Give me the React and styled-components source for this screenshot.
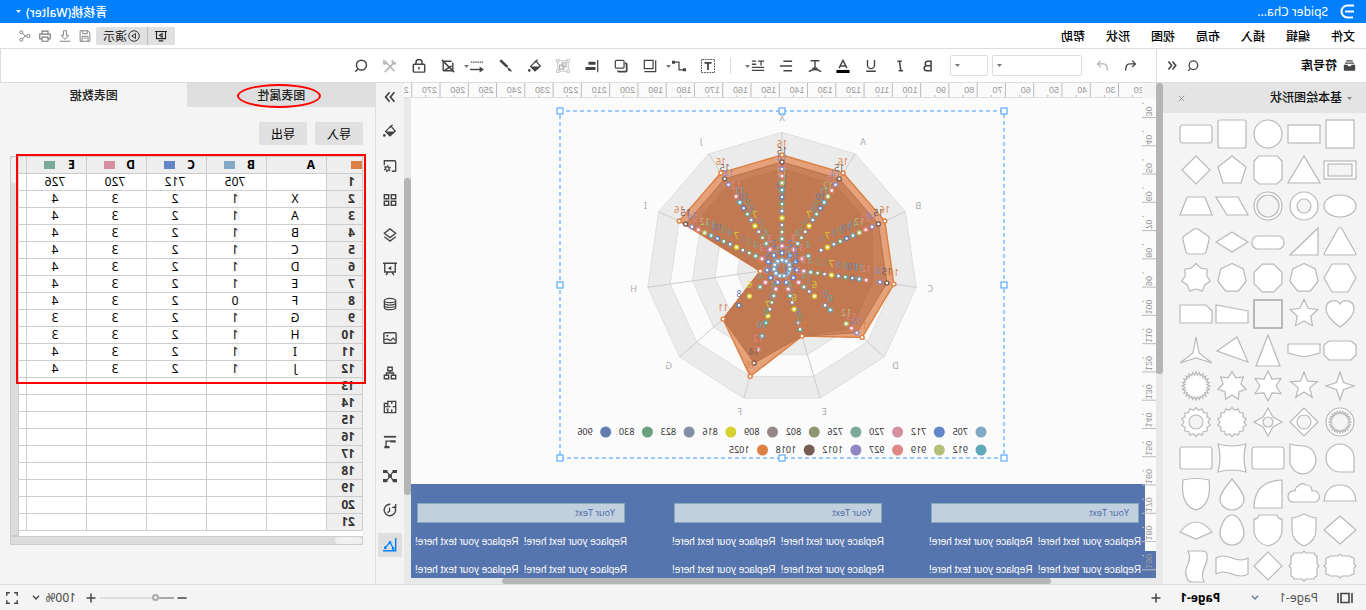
import React from "react";
import styled, { createGlobalStyle, css } from "styled-components";

const GlobalStyle = createGlobalStyle`
  * { box-sizing: border-box; }
  body { margin: 0; overflow: hidden; background: #f4f4f4; }
  body, button, input, select { font-family: "Noto Sans", "Noto Sans CJK SC", sans-serif; font-size: 12px; }
  button { border: 0; padding: 0; background: none; color: inherit; }
`;

/* The editor is displayed as a mirror image; everything inside is laid out left to right. */
const Mirror = styled.div`
  transform: scaleX(-1);
  display: flex;
  flex-direction: column;
  height: 100vh;
  min-width: 1200px;
  color: #222;
  line-height: 16px;
`;

/* ---------- title and menu ---------- */
const TitleBar = styled.header`
  display: flex;
  align-items: center;
  flex: none;
  height: 23px;
  padding: 0 16px 0 11px;
  background: #007fff;
  color: #fff;
`;
const FileName = styled.span`
  margin-left: 12px;
`;
const Account = styled.button`
  display: flex;
  align-items: center;
  gap: 5px;
  margin-left: auto;
  font-weight: 500;
`;
const MenuBar = styled.nav`
  display: flex;
  align-items: center;
  flex: none;
  height: 25px;
  padding: 0 18px 0 11px;
  background: #fff;
  color: #000;
`;
const MenuItem = styled.button`
  margin-right: 21px;
  font-weight: 500;
`;
const QuickActions = styled.div`
  display: flex;
  align-items: center;
  gap: 6px;
  margin-left: auto;
  color: #777;
`;
const PresentGroup = styled.div`
  display: flex;
  height: 18px;
  margin-right: -2px;
  border-radius: 2px;
  overflow: hidden;
  background: #e0e0e0;
  color: #222;
`;
const PresentButton = styled.button`
  display: flex;
  align-items: center;
  justify-content: center;
  gap: 1px;
  width: ${(p) => (p.$wide ? 52 : 27)}px;
  border-left: ${(p) => (p.$wide ? "1px solid #bbb" : "0")};
`;
const IconButton = styled.button`
  position: relative;
  display: flex;
  align-items: center;
  justify-content: center;
  flex: none;
  width: ${(p) => p.$w || 20}px;
  height: ${(p) => p.$h || 20}px;
  border-radius: 1px;
  background: ${(p) => (p.$active ? "#dfdfdf" : "none")};
  color: ${(p) => (p.$active ? "#007fff" : p.$dim ? "#b5b5b5" : "inherit")};
`;

/* ---------- tool bar ---------- */
const ToolBar = styled.div`
  display: flex;
  flex: none;
  height: 35px;
  border-top: 1px solid #ddd;
  border-bottom: 1px solid #ddd;
  background: #fff;
  color: #444;
`;
const LibraryTitle = styled.div`
  display: flex;
  align-items: center;
  flex: none;
  width: 210px;
  padding: 0 6px 0 10px;
  border-right: 1px solid #ddd;
`;
const LibraryName = styled.h2`
  flex: 1;
  margin: 0 0 0 6px;
  font-size: 12px;
  color: #111;
`;
const Tools = styled.div`
  display: flex;
  align-items: center;
  flex: 1;
  padding-left: 15px;
  border-right: 1px solid #ddd;
`;
const History = styled.div`
  display: flex;
  gap: 8px;
  margin-right: 11px;
`;
const PickerBox = styled.span`
  position: relative;
  flex: none;
  width: ${(p) => p.$w}px;
  margin-right: 4px;
`;
const Picker = styled.select`
  display: block;
  width: 100%;
  height: 21px;
  border: 1px solid #ddd;
  border-radius: 2px;
  background: #fff;
  appearance: none;
`;
const PickerCaret = styled.span`
  position: absolute;
  right: 5px;
  top: 9px;
  display: flex;
  pointer-events: none;
`;
const ToolGroup = styled.div`
  display: flex;
  justify-content: space-between;
  flex: none;
  width: ${(p) => p.$w}px;
  margin-left: ${(p) => p.$gap || 0}px;
`;
const ToolCaret = styled.span`
  position: absolute;
  right: -3px;
  top: 9px;
  display: flex;
`;
const Divider = styled.span`
  width: 1px;
  height: 16px;
  margin: 0 12px 0 17px;
  background: #ddd;
`;

/* ---------- shape library ---------- */
const Workspace = styled.div`
  display: flex;
  flex: 1;
  min-height: 0;
  background: #f4f4f4;
`;
const Library = styled.aside`
  flex: none;
  width: 203px;
  overflow: hidden;
`;
const LibraryHead = styled.div`
  display: flex;
  align-items: center;
  height: 30px;
  padding: 0 14px;
  background: #e4e4e4;
  color: #888;
`;
const LibraryHeadName = styled.h3`
  flex: 1;
  margin: 0 0 0 5px;
  font-size: 12px;
  font-weight: 500;
  color: #111;
`;
const ShapeGrid = styled.div`
  display: grid;
  grid-template-columns: repeat(5, 36px);
  grid-auto-rows: 36px;
  padding: 3px 0 0 8px;
`;
const ShapeCell = styled.button`
  display: flex;
  svg { overflow: visible; fill: #fff; stroke: #b8b8b8; stroke-width: 1.2; }
`;
const ScrollTrack = styled.div`
  display: flex;
  flex-direction: ${(p) => (p.$x ? "row" : "column")};
  flex: none;
  ${(p) => (p.$x ? css`height: 6px;` : css`width: 7px;`)}
  background: #e9e9e9;
`;
const ScrollThumb = styled.div`
  flex: none;
  border-radius: 3px;
  background: #b5b5b5;
  ${(p) => (p.$x
    ? css`width: ${p.$size}; margin-left: ${p.$at};`
    : css`height: ${p.$size}; margin-top: ${p.$at};`)}
`;

/* ---------- canvas ---------- */
const Center = styled.main`
  display: flex;
  flex-direction: column;
  flex: 1;
  min-width: 0;
`;
const TopRuler = styled.div`
  flex: none;
  height: 15px;
  margin-left: 14px;
  border-bottom: 1px solid #ddd;
  overflow: hidden;
  background: #fafafa;
  svg { display: block; }
`;
const CanvasRow = styled.div`
  display: flex;
  flex: 1;
  min-height: 0;
`;
const SideRuler = styled.div`
  flex: none;
  width: 14px;
  overflow: hidden;
  background: #fafafa;
  svg { display: block; }
`;
const Canvas = styled.section`
  display: flex;
  flex-direction: column;
  flex: 1;
  min-width: 0;
  overflow: hidden;
  background: #fbfbfb;
`;
const ChartArea = styled.div`
  flex: none;
  height: 386px;
  padding: 9px 0 0 134px;
  svg { display: block; }
`;
const Band = styled.div`
  display: flex;
  gap: 45px;
  flex: 1;
  padding: 19px 0 0 1px;
  background: #5675ae;
`;
const Card = styled.div`
  flex: none;
  width: 212px;
`;
const CardTitle = styled.h4`
  height: 20px;
  margin: 0 2px 11px;
  padding: 0 9px;
  border: 1px solid #86aabd;
  background: #c0d0df;
  color: #4a65a0;
  font: 9px/18px "Open Sans", sans-serif;
`;
const CardLine = styled.p`
  display: flex;
  justify-content: space-between;
  margin: 0 0 12px;
  color: #fff;
  font: 10px/16px "Liberation Sans", sans-serif;
  white-space: nowrap;
`;

/* ---------- right side ---------- */
const Rail = styled.div`
  display: flex;
  flex-direction: column;
  justify-content: space-between;
  align-items: center;
  flex: none;
  width: 28px;
  height: 474px;
  padding-top: 2px;
  color: #444;
`;
const Panel = styled.aside`
  position: relative;
  flex: none;
  width: 376px;
  border-left: 1px solid #ddd;
`;
const Tabs = styled.div`
  display: flex;
  height: 24px;
`;
const Tab = styled.button`
  position: relative;
  flex: 1;
  font-weight: 500;
  background: ${(p) => (p.$shaded ? "#dedede" : "none")};
  border-radius: 0 0 2px 0;
`;
const RedOval = styled.span`
  position: absolute;
  left: 54px;
  top: 1px;
  width: 84px;
  height: 24px;
  border: 2px solid #f00;
  border-radius: 50%;
`;
const PanelButtons = styled.div`
  display: flex;
  gap: 8px;
  padding: 15px 12px 11px;
`;
const PanelButton = styled.button`
  width: 48px;
  height: 23px;
  border-radius: 2px;
  background: #e0e0e0;
  color: #000;
`;
const SheetFrame = styled.div`
  position: relative;
  width: 353px;
  margin-left: 12px;
  display: grid;
  grid-template-columns: 1fr 9px;
`;
const SheetView = styled.div`
  overflow: hidden;
  padding-bottom: 5px;
  background: #fff;
`;
const Sheet = styled.table`
  width: 396px;
  table-layout: fixed;
  border-collapse: collapse;
  line-height: 14px;
  color: #000;
  th, td { height: 17px; padding: 0; border: 1px solid #ccc; }
  thead th, tbody th { background: #eee; text-align: left; }
  tbody th { padding-left: 7px; color: #333; }
  td { background: #fff; padding-left: 3px; text-align: center; }
`;
const HeadCell = styled.div`
  display: flex;
  align-items: center;
  padding-left: ${(p) => (p.$corner ? 0 : 11)}px;
`;
const HeadLetter = styled.span`
  width: 20px;
`;
const Swatch = styled.span`
  width: 11px;
  height: 8px;
  background: ${(p) => p.$c};
`;
const SheetBar = styled.div`
  background: #dcdcdc;
  border: 1px solid #ccc;
  grid-column: ${(p) => (p.$x ? "1 / 3" : "auto")};
  height: ${(p) => (p.$x ? "9px" : "auto")};
`;
const SheetThumb = styled.div`
  background: #f0f0f0;
  border-radius: 4px;
  width: ${(p) => (p.$x ? "27px" : "7px")};
  height: ${(p) => (p.$x ? "7px" : "26px")};
`;
const RedBox = styled.div`
  position: absolute;
  left: -3px;
  right: 6px;
  top: -2px;
  height: 230px;
  border: 2px solid #f00;
`;

/* ---------- status bar ---------- */
const StatusBar = styled.footer`
  display: flex;
  align-items: center;
  flex: none;
  height: 26px;
  padding: 0 0 0 11px;
  border-top: 1px solid #ddd;
  background: #f4f4f4;
  color: #444;
`;
const PageSelect = styled.button`
  display: flex;
  align-items: center;
  gap: 20px;
  margin-left: 17px;
  color: #555;
`;
const CurrentPage = styled.button`
  margin: 0 14px 0 31px;
  font-weight: 700;
  color: #000;
`;
const ZoomTools = styled.div`
  display: flex;
  align-items: center;
  margin-left: auto;
`;
const ZoomSlider = styled.input`
  width: 74px;
  height: 10px;
  margin: 0 1px 0 2px;
  background: none;
  appearance: none;
  &::-webkit-slider-runnable-track {
    height: 2px;
    background: linear-gradient(90deg, #aaa 20%, #ddd 20%);
  }
  &::-webkit-slider-thumb {
    appearance: none;
    width: 7px;
    height: 7px;
    margin-top: -3px;
    border: 2px solid #aaa;
    border-radius: 50%;
    background: #fff;
  }
`;
const ZoomLevel = styled.select`
  width: 36px;
  margin-left: 7px;
  padding: 0;
  border: 0;
  background: none;
  color: #444;
  appearance: none;
`;
const ScreenTools = styled.div`
  display: flex;
  margin-left: 8px;
`;

/* ---------- icons ---------- */
const Icon = ({ children, s = 14, w = 1.4, box = 16 }) => (
  <svg width={s} height={s} viewBox={`0 0 ${box} ${box}`} fill="none" stroke="currentColor" strokeWidth={w} aria-hidden="true">
    {children}
  </svg>
);
const Caret = ({ color = "currentColor" }) => (
  <svg width="5" height="3" viewBox="0 0 5 3" aria-hidden="true"><path d="M0 0h5L2.500 3z" fill={color} /></svg>
);
const Chevron = ({ color = "currentColor" }) => (
  <svg width="8" height="5" viewBox="0 0 8 5" fill="none" stroke={color} strokeWidth="1.300" aria-hidden="true"><path d="M1 .7 4 4 7 .7" /></svg>
);
const F = { fill: "currentColor", stroke: "none" };
const I = {
  search: <><circle cx="7.500" cy="7" r="5.700" strokeWidth="1.700" /><path d="M11.500 11.500l3 3" strokeWidth="1.700" /></>,
  collapse: <path d="M8 3 4 8l4 5M13 3 9 8l4 5" strokeWidth="2" />,
  expand: <path d="M3 2.500l4.500 5.500L3 13.500M8.500 2.500 13 8l-4.500 5.500" strokeWidth="2" />,
  library: <><path d="M1 7h4.500l1 2h3l1-2H15v6.500a1 1 0 0 1-1 1H2a1 1 0 0 1-1-1z" {...F} /><path d="M2.500 5h11M4 2.300h8" /></>,
  undo: <path d="M6 2 2 6l4 4M2.500 6H9q5 0 5 8" strokeWidth="1.700" />,
  redo: <path d="M10 2l4 4-4 4M13.500 6H7q-5 0-5 8" strokeWidth="1.700" />,
  bold: <path d="M4.500 2.500h4a2.600 2.600 0 0 1 0 5.300h-4zM4.500 7.800h5a2.800 2.800 0 0 1 0 5.700h-5z" strokeWidth="1.800" />,
  italic: <path d="M6 2.500h5M4.500 13.500h5M8.700 2.500l-1.700 11" strokeWidth="1.800" />,
  underline: <path d="M4 1v6a4 4 0 0 0 8 0V1M2.500 14h11" strokeWidth="1.600" />,
  color: <><path d="M3.500 10.500 8 1.500l4.500 9M5 8h6" strokeWidth="1.600" /><path d="M.5 12.500h15V16H.5z" fill="#000" stroke="none" /></>,
  arc: <path d="M3 2h10M8 2v8M5 10.500h6M1 14.500q7-5 14 0" strokeWidth="1.600" />,
  align: <path d="M1 2.500h10M1 8h14M1 13.500h10" strokeWidth="1.600" />,
  spacing: <path d="M1 2.500h7M4.500 2.500v5M10 2.500h5M10 6h5M1 9.500h14M1 13h14" strokeWidth="1.500" />,
  textbox: <><path d="M.5 .5h15v15H.5z" strokeDasharray="2 1" strokeWidth="1.100" /><path d="M4 4.500h8M8 4.500v8" strokeWidth="2" /></>,
  connector: <><path d="M2.500 12.500H8v-9h5" /><path d="M0 10.500h3.500V14H0zM12.500 2H16v3.500h-3.500z" {...F} /></>,
  front: <><path d="M4.500 1.500h10v9.500h-10z" /><path d="M1.500 1.500v13H14.500" /></>,
  copy: <><rect x="4.500" y="1.500" width="10" height="9" rx="1.500" /><path d="M3.500 5H2.500q-1 0-1 1v7.500q0 1 1 1h7.500q1.500 0 1.500-1.500" strokeWidth="2" /></>,
  alignLeft: <><path d="M1.500 1v14" /><path d="M4 3h8v3.500H4zM4 9h11.500v3.500H4z" {...F} /></>,
  group: <><path d="M.5 .5h3v3h-3zM12.500 .5h3v3h-3zM.5 12.500h3v3h-3zM12.500 12.500h3v3h-3zM4 2h8M4 14h8M2 4v8M14 4v8" strokeWidth=".9" /><path d="M4.500 4.500h4.500v4.500h-4.500zM7 7h5v4.500H7z" /></>,
  fill: <><path d="M7 2.500 13 8.500 8 13.500 2 8z" /><path d="M1.500 8.500H13L8 14z" {...F} /><path d="M8.500 4 5 .8" /><circle cx="14.500" cy="13" r="1.500" {...F} /></>,
  brush: <><path d="M14.500 1.500 6.500 9" strokeWidth="3" /><path d="M7 9 3 11.500 1 14.500 5 13.500z" {...F} /></>,
  lines: <><path d="M1 3.500h14" strokeDasharray="1.500 1" /><path d="M4 12h12" strokeWidth="1.600" /><path d="M5 8.500 0 12l5 3.500z" {...F} /></>,
  crop: <><path d="M2.500 4v8.500q0 1 1 1h9q1 0 1-1v-9q0-1-1-1H4" strokeWidth="1.600" /><path d="M15 1 1 15M4 8l8 5" strokeWidth="1.700" /></>,
  lock: <><rect x="1.500" y="6" width="13" height="9" rx="1" strokeWidth="1.700" /><path d="M4.500 6V4a3.500 3.500 0 0 1 7 0v2M8 9v3" strokeWidth="1.700" /></>,
  tools: <><path d="M2 3l12 12M14 2 3 14M1 5.500h4L5.500 1M11 5.500h4V1.500" strokeWidth="1.800" /></>,
  save: <path d="M1.500 4 4 1h10.500v14h-13zM5 1v4h6V1M4 15V8.500h8V15M6 11h4" />,
  download: <path d="M6 1v6H3l5 5.500L13 7h-3V1zM1 15h14" />,
  print: <path d="M4 5V1.500h8V5M4 12H1V5.500h14V12H12M4 9.500h8V15H4z" strokeWidth="1.500" />,
  share: <><circle cx="3.500" cy="8" r="2.200" /><circle cx="13" cy="3" r="2" /><circle cx="13" cy="13" r="2" /><path d="M6 8h2l3.500-4M8 8l3.500 4" /></>,
  screen: <><path d="M0 2h16M2 2v9.500h12V2M5 14.500h6" strokeWidth="1.500" /><path d="M6.500 4.500 10 7l-3.500 2.500z" /></>,
  play: <><circle cx="8" cy="8" r="7" strokeWidth="1.200" /><path d="M6 4.800v6.400L11 8z" strokeWidth="1.200" /></>,
  gear: <><path d="M1.500 2.500h13v11.500H6" strokeWidth="0" /><path d="M1.500 14V3.500q0-1.500 1.500-1.500h11.500V7M1.500 14H6" strokeWidth="1.500" /><circle cx="11" cy="11" r="3" strokeWidth="2" strokeDasharray="1.600 1.540" /><circle cx="11" cy="11" r="2" strokeWidth="1.300" /></>,
  grid: <path d="M1.500 2h5v4.500h-5zM9.500 2h5v4.500h-5zM1.500 9.500h5V14h-5zM9.500 9.500h5V14h-5z" strokeWidth="1.600" />,
  layers: <path d="M8 1 14.500 6 8 11 1.500 6zM1.500 10 8 15l6.500-5" strokeWidth="1.500" />,
  board: <><path d="M0 1.500h16M2 2v9.500h12V2M5.500 12l-2 3M10.500 12l2 3" strokeWidth="1.600" /><path d="M6.500 4.500 10.500 7l-4 2.500z" {...F} /></>,
  data: <><ellipse cx="8" cy="4" rx="6.500" ry="2.500" /><path d="M1.500 4v8q0 2.500 6.500 2.500t6.500-2.500V4M1.500 6.700q0 2.500 6.500 2.500t6.500-2.500M1.500 9.500q0 2.500 6.500 2.500t6.500-2.500" /></>,
  image: <><rect x="1" y="2" width="14" height="12" rx="1" strokeWidth="1.600" /><path d="M1.500 11l3-3 3 3 3.500-2 3.500 1" /><circle cx="11" cy="5.500" r="1.200" {...F} /></>,
  org: <path d="M5.500 1.500h5v4h-5zM1.500 10.500h5v4h-5zM9.500 10.500h5v4h-5zM8 5.500V8M4 10.500V8h8v2.500" strokeWidth="1.600" />,
  plan: <path d="M1.500 1.500h9v2.500h4v10.500h-13zM1.500 7.500H5M7.500 7.500h2M6 1.500v3M6 14.500v-4M10.500 4v3.500h4M10.500 14.500v-4h1.500" strokeWidth="1.500" />,
  gantt: <><path d="M1 2h14" strokeWidth="2" /><path d="M1.500 6h6v2.500h-6zM8.500 12.500h6V15h-6z" {...F} /><path d="M7 7h5.500v5.500" strokeWidth="1.600" /></>,
  mind: <><path d="M0 1h5v3.500H0zM11 1h5v3.500h-5zM0 11.500h5V15H0zM11 11.500h5V15h-5z" {...F} /><path d="M4.500 3 8 8l3.500 5M11.500 3 8 8l-3.500 5" strokeWidth="1.400" /><circle cx="8" cy="8" r="2.400" {...F} /></>,
  history: <><path d="M3 4A6.500 6.500 0 1 0 8 1.500q-3 0-5 2.500" strokeDasharray="35 6" strokeWidth="1.600" /><path d="M1.500 1v4h4" strokeWidth="1.600" /><path d="M8.500 5v4.500l2.500 1.500" /></>,
  chart: <><path d="M1.500 0v14.500H16" strokeWidth="1.600" /><path d="M4 12 8 5l5.500 6" /><path d="M3 10.500h2.800v2.800H3zM6.600 3.600h2.800v2.800H6.600zM12 9.800h2.800v2.800H12z" {...F} /></>,
  pages: <path d="M4 3.500h8v9H4zM1 3v10M15 3v10" strokeWidth="1.600" />,
  plus: <path d="M8 2v12M2 8h12" strokeWidth="2" />,
  minus: <path d="M2 8h12" strokeWidth="2" />,
  full: <path d="M2 5.500V2h3.500M10.500 2H14v3.500M14 10.500V14h-3.500M5.500 14H2v-3.500" strokeWidth="1.600" />,
  close: <path d="M3 3l10 10M13 3 3 13" strokeWidth="1.500" />,
};
I.lines = <><path d="M1 3.500h14" strokeDasharray="1.500 1" /><path d="M4 12h12" strokeWidth="1.600" /><path d="M5 8.500 0 12l5 3.500z" {...F} /></>;

/* ---------- library shapes, drawn around the origin ---------- */
const ring = (n, r, inner, rot = -90) => {
  const total = inner ? n * 2 : n;
  return Array.from({ length: total }, (_, i) => {
    const a = ((rot + (360 / total) * i) * Math.PI) / 180;
    const q = inner && i % 2 ? inner : r;
    return `${(q * Math.cos(a)).toFixed(1)},${(q * Math.sin(a)).toFixed(1)}`;
  }).join(" ");
};
const P = (pts, extra) => <polygon points={pts} {...extra} />;
const round = { strokeLinejoin: "round" };
const shapes = [
  <rect x="-14" y="-14" width="28" height="28" />,
  <rect x="-16" y="-9" width="32" height="18" />,
  <circle r="14" />,
  <rect x="-14" y="-14" width="28" height="28" rx="2" />,
  <rect x="-16" y="-9" width="32" height="18" rx="3" />,

  <><rect x="-16" y="-9" width="32" height="18" /><rect x="-12" y="-6" width="24" height="12" fill="#f4f4f4" /></>,
  P("0,-14 16,13 -16,13"),
  P("-9,-14 9,-14 14,-9 14,9 9,14 -9,14 -14,9 -14,-9", round),
  P("0,-14 14,-3 9,13 -9,13 -14,-3"),
  P("0,-14 14,0 0,14 -14,0"),

  <ellipse rx="16" ry="11" />,
  <><circle r="14" /><circle r="7" fill="#f4f4f4" /></>,
  <><circle r="14" /><circle r="11" fill="#f4f4f4" /></>,
  P("-6,-9 16,-9 5,9 -16,9"),
  P("-9,-9 9,-9 16,9 -16,9"),

  <path d="M-2-13Q0-16 2-13L15 10Q17 13 14 13H-14Q-17 13-15 10z" />,
  P("-14,-14 -14,13 14,13"),
  <rect x="-16" y="-6" width="32" height="13" rx="6" />,
  P("0,-10 16,0 0,10 -16,0"),
  <path d="M-2-13Q0-14 2-13L12-6Q14-4 13-2L10 10Q9 12 7 12H-7Q-9 12-10 10L-13-2Q-14-4-12-6z" />,

  P("-8,-14 8,-14 16,0 8,14 -8,14 -16,0"),
  P(ring(7, 14.5)),
  P(ring(8, 15, 0, 22.5)),
  P(ring(7, 14.5)),
  P(ring(7, 14.5, 11), round),

  <path d="M0 13Q-14 3-14-5C-14-15-2-15 0-10 2-15 14-15 14-5Q14 3 0 13z" />,
  P(ring(5, 14.5, 7)),
  <rect x="-14" y="-14" width="28" height="28" fill="#f4f4f4" strokeWidth="2" />,
  P("-16,-3 16,-9 16,9 -16,9"),
  P("-10,-9 16,-9 16,9 -16,9 -16,-3"),

  P("-11,-9 11,-9 16,-5 16,5 11,10 -11,10 -16,5 -16,-5"),
  P("-16,-6 16,-6 16,3 0,7 -16,3"),
  P("0,-15 12,16 -12,16"),
  P("-5,-13 -16,12 15,1"),
  P("0,-13 3,3 16,13 0,8 -16,13 -3,3"),

  P(ring(4, 14, 5)),
  P(ring(5, 14, 6)),
  P(ring(6, 15, 8)),
  P(ring(7, 14.5, 9)),
  P(ring(24, 14, 11)),

  <><circle r="14" /><polygon points={ring(24, 11, 8.5)} fill="#f4f4f4" /></>,
  <>{P("0,-14 14,0 0,14 -14,0")}<circle r="7" fill="#f4f4f4" /></>,
  <>{P(ring(4, 14, 7))}<circle r="5" fill="#f4f4f4" /></>,
  P(ring(14, 14.5, 12), round),
  <>{P(ring(14, 14.5, 12), round)}<circle r="7" fill="#f4f4f4" /></>,

  <path d="M-14 14V0A14 14 0 1 1 0 14z" />,
  <path d="M14-14V0A13 14 0 1 1 0-12Q8-12 14-14z" />,
  <rect x="-16" y="-11" width="32" height="22" rx="3" />,
  <path d="M-14-14Q0-10 14-14 10 0 14 14 0 10-14 14-10 0-14-14z" />,
  <rect x="-16" y="-11" width="32" height="22" rx="2" />,

  <path d="M-16 7Q-14-9 0-9T16 7z" />,
  <path d="M-12 8Q-18 4-14-1-11-4-8-3-8-9-2-9 2-12 6-8 9-6 9-3 15-4 16 2 16 8 11 8z" />,
  <path d="M-14 14V-14Q14-13 14 14z" />,
  <path d="M0-15Q12-1 12 5A12 11 0 0 1-12 5Q-12-1 0-15z" />,
  <path d="M-13-14Q0-17 13-14Q16 11 0 16-16 11-13-14z" />,

  P("0,-14 16,0 0,14 -16,0"),
  <path d="M-12-12Q-5-13 0-16 5-13 12-12V0Q12 11 0 16-12 11-12 0z" />,
  <path d="M-9-15H9Q10-11 14-11V2Q12 13 0 16-12 13-14 2V-11Q-10-11-9-15z" />,
  <path d="M0-15C8-15 12-2 12 3A12 12 0 0 1-12 3C-12-2-8-15 0-15z" />,
  <path d="M-16 2Q0-18 16 2L0 9z" />,

  <path d="M-10-10H-2L0-12 2-10H10Q11-8 14-8V-2L16 0 14 2V8Q11 8 10 10H2L0 12-2 10H-10Q-11 8-14 8V2L-16 0-14-2V-8Q-11-8-10-10z" />,
  <path d="M-10-13H-2L0-15 2-13H10Q11-10 13-10V-2L15 0 13 2V10Q10 11 10 13H2L0 15-2 13H-10Q-11 10-13 10V2L-15 0-13-2V-10Q-11-10-10-13z" />,
  P("0,-14 14,0 0,14 -14,0"),
  <path d="M-16-8Q-10-4 0-8T16-8V8Q10 4 0 8T-16 8z" />,
  <path d="M-11-12Q-10-15-6-15H8Q5-9 8-2 12 5 9 12 8 16 4 16H-8Q-5 10-8 2-12-5-11-12z" />,
];

/* ---------- chart data ---------- */
const series = [
  ["705", "#82a9c5"], ["712", "#6284c8"], ["720", "#d58fa0"], ["726", "#7ca99c"],
  ["802", "#8f9570"], ["809", "#958787"], ["816", "#d5d132"], ["823", "#8190a4"],
  ["830", "#6b9f80"], ["906", "#647cb0"], ["912", "#5fa8ba"], ["919", "#b2c07a"],
  ["927", "#de8784"], ["1012", "#9086c4"], ["1018", "#775d54"], ["1025", "#dd8044"],
];
const axes = ["X", "A", "B", "C", "D", "E", "F", "G", "H", "I", "J"];
/* one row for each axis: the value of every series, 0 where nothing is marked */
const values = [
  [1, 2, 3, 4, 5, 6, 7, 8, 9, 10, 11, 12, 13, 14, 15, 16],
  [1, 2, 3, 4, 5, 6, 7, 8, 9, 10, 11, 12, 13, 14, 15, 16],
  [1, 2, 3, 4, 0, 6, 7, 8, 9, 10, 11, 12, 13, 14, 15, 16],
  [1, 2, 3, 4, 5, 6, 7, 8, 9, 10, 11, 0, 12, 14, 15, 16],
  [1, 2, 3, 4, 0, 5, 6, 8, 0, 0, 9, 12, 13, 14, 0, 15],
  [1, 2, 3, 4, 0, 5, 6, 8, 9, 0, 0, 0, 0, 0, 0, 10],
  [1, 2, 3, 4, 5, 6, 7, 0, 8, 0, 10, 0, 12, 0, 14, 16],
  [1, 2, 3, 4, 0, 0, 6, 0, 0, 8, 0, 0, 0, 0, 0, 11],
  [1, 2, 0, 0, 0, 0, 0, 0, 0, 0, 0, 0, 0, 0, 0, 3],
  [1, 2, 3, 4, 5, 6, 7, 8, 9, 10, 11, 12, 13, 14, 15, 16],
  [1, 2, 3, 4, 5, 6, 7, 8, 9, 10, 11, 0, 12, 14, 15, 16],
];
/* the axes run counter-clockwise from the top */
const polar = (i, r) => {
  const a = (i * 2 * Math.PI) / 11;
  return [-r * Math.sin(a), -r * Math.cos(a)];
};
const outline = (fn) => axes.map((_, i) => polar(i, fn(i)).map((n) => n.toFixed(1)).join(",")).join(" ");
const radius = (v) => v * 7 + 1;
const front = [15, 15, 15, 15, 14, 10, 14, 11, 3, 15, 15];
const middle = [14, 14, 14, 13, 13, 10, 14, 11, 3, 14, 14];

const SpiderChart = () => (
  <svg width="454" height="357" viewBox="-4 -4 454 357" fontFamily="Noto Sans, sans-serif" role="img" aria-label="Spider chart">
    <g transform="translate(222 157)">
      {[6, 5, 4, 3, 2, 1].map((k) => (
        <polygon key={k} points={outline(() => k * 22.6)} fill={k % 2 ? "#fbfbfb" : "#ebebeb"} stroke="#dedede" />
      ))}
      {axes.map((name, i) => {
        const [x, y] = polar(i, 135.6);
        const [lx, ly] = polar(i, 150);
        return (
          <g key={name}>
            <line x2={x} y2={y} stroke="#ccc" />
            <text x={lx} y={ly + 3} fontSize="9" fill="#aaa" textAnchor="middle">{name}</text>
          </g>
        );
      })}
      <polygon points={outline((i) => radius(values[i][15]))} fill="#e5a27a" stroke="#dd8044" strokeWidth="1.500" />
      <polygon points={outline((i) => radius(front[i]))} fill="#c8815a" stroke="#bb724a" />
      <polygon points={outline((i) => radius(middle[i]))} fill="#c27850" stroke="#bd754e" strokeWidth=".5" />
      {values.map((row, i) => row.map((v, s) => {
        if (!v) return null;
        const [x, y] = polar(i, radius(v));
        return (
          <g key={`${i}-${s}`}>
            <circle cx={x} cy={y} r="2" fill="#fff" stroke={series[s][1]} strokeWidth="1.400" />
            <text x={x} y={y - 8} fontSize="9" fill={series[s][1]} textAnchor="middle">{v}</text>
          </g>
        );
      }))}
    </g>
    {series.map(([name, c], i) => {
      const second = i > 9;
      const n = second ? i - 10 : i;
      const x = 23 + n * 41.7 + (second && n > 3 ? (n - 3) * 5 : 0);
      const y = second ? 339 : 321;
      return (
        <g key={name}>
          <circle cx={x} cy={y} r="5.500" fill={c} />
          <text x={x + 13} y={y + 3} fontSize="9" fill="#333">{name}</text>
        </g>
      );
    })}
    <rect width="444" height="347" fill="none" stroke="#3c9bff" strokeDasharray="4 3" />
    {[[0, 0], [222, 0], [444, 0], [0, 174], [444, 174], [0, 347], [222, 347], [444, 347]].map(([x, y]) => (
      <rect key={`${x}-${y}`} x={x - 3} y={y - 3} width="6" height="6" fill="#fff" stroke="#3c9bff" />
    ))}
  </svg>
);

/* ruler marks fill the part of the window that the canvas takes */
const STEP = 28.27;
const HorizontalRuler = () => (
  <svg width={window.innerWidth} height="14" fontFamily="Liberation Sans, sans-serif" fontSize="9" fill="#999" aria-hidden="true">
    {Array.from({ length: Math.ceil((window.innerWidth - 614) / STEP) }, (_, i) => {
      const x = 23.5 + (i - 1) * STEP;
      return (
        <g key={i}>
          <path d={`M${x} 0V14M${x + STEP / 2} 12V14`} stroke="#bbb" />
          <text x={x + 3} y="10">{20 + i * 10}</text>
        </g>
      );
    })}
  </svg>
);
const VerticalRuler = () => (
  <svg width="14" height={window.innerHeight} fontFamily="Liberation Sans, sans-serif" fontSize="9" fill="#999" aria-hidden="true">
    <path d="M0 453H14V1600H0zM11 386H14V453H11z" fill="#5675ae" />
    {Array.from({ length: Math.ceil((window.innerHeight - 130) / STEP) }, (_, i) => {
      const y = 19.5 + i * STEP;
      return (
        <g key={i}>
          <path d={`M0 ${y}H14M12 ${y - STEP / 2}H14`} stroke="#bbb" />
          <text transform={`translate(10 ${y - 1}) rotate(-90)`}>{30 + i * 10}</text>
        </g>
      );
    })}
  </svg>
);

const menu = ["文件", "编辑", "插入", "布局", "视图", "形状", "帮助"];
const textTools = [["bold", "Bold"], ["italic", "Italic"], ["underline", "Underline"], ["color", "Font color"], ["arc", "Text effect"], ["align", "Align"], ["spacing", "Line spacing", "caret"]];
const drawTools = [["textbox", "Text box"], ["connector", "Connector", "caret"], ["front", "Bring forward"], ["copy", "Duplicate"], ["alignLeft", "Align shapes"], ["group", "Group", "dim"], ["fill", "Fill"], ["brush", "Line"], ["lines", "Line style", "caret"], ["crop", "Crop"], ["lock", "Lock"], ["tools", "Tools", "dim"], ["search", "Find"]];
const rail = [["expand", "Collapse panel"], ["fill", "Style"], ["gear", "Page settings"], ["grid", "Symbols"], ["layers", "Layers"], ["board", "Presentation"], ["data", "Data"], ["image", "Pictures"], ["org", "Org chart"], ["plan", "Floor plan"], ["gantt", "Gantt"], ["mind", "Mind map"], ["history", "History"], ["chart", "Chart"]];
const columns = [["A"], ["B", 0], ["C", 1], ["D", 2], ["E", 3], [""]];
const sheetRows = [
  ["", "705", "712", "720", "726"],
  ...axes.map((n) => [n, n === "F" ? "0" : "1", "2", "3", n === "G" || n === "H" ? "3" : "4"]),
  ...Array.from({ length: 9 }, () => ["", "", "", "", ""]),
];
const replaceText = "Replace your text here!";

const ToolItems = ({ items }) => items.map(([id, label, flag]) => (
  <IconButton key={id} aria-label={label} $dim={flag === "dim"}>
    <Icon>{I[id]}</Icon>
    {flag === "caret" && <ToolCaret><Caret color="#777" /></ToolCaret>}
  </IconButton>
));

export default function App() {
  return (
    <>
      <GlobalStyle />
      <Mirror>
        <TitleBar>
          <svg width="15" height="15" viewBox="0 0 15 15" fill="none" stroke="#fff" strokeWidth="2" aria-hidden="true">
            <path d="M1 1.500H7.500a6 6 0 0 1 0 12H2M1 7.500h9" />
          </svg>
          <FileName>Spider Cha...</FileName>
          <Account>青核桃(Walter)<Caret /></Account>
        </TitleBar>
        <MenuBar>
          {menu.map((m) => <MenuItem key={m}>{m}</MenuItem>)}
          <QuickActions>
            <PresentGroup>
              <PresentButton aria-label="Slides"><Icon s={12}>{I.screen}</Icon></PresentButton>
              <PresentButton $wide><Icon s={12}>{I.play}</Icon>演示</PresentButton>
            </PresentGroup>
            {[["save", "Save"], ["download", "Download"], ["print", "Print"], ["share", "Share"]].map(([id, label]) => (
              <IconButton key={id} $w={14} aria-label={label}><Icon s={12} w={1.2}>{I[id]}</Icon></IconButton>
            ))}
          </QuickActions>
        </MenuBar>
        <ToolBar>
          <LibraryTitle>
            <Icon s={13}>{I.library}</Icon>
            <LibraryName>符号库</LibraryName>
            <IconButton aria-label="Search symbols"><Icon s={12}>{I.search}</Icon></IconButton>
            <IconButton aria-label="Collapse library"><Icon s={13}>{I.collapse}</Icon></IconButton>
          </LibraryTitle>
          <Tools>
            <History>
              <IconButton aria-label="Undo"><Icon s={13}>{I.undo}</Icon></IconButton>
              <IconButton aria-label="Redo" $dim><Icon s={13}>{I.redo}</Icon></IconButton>
            </History>
            <PickerBox $w={90}>
              <Picker aria-label="Font" defaultValue=""><option value="" /></Picker>
              <PickerCaret><Caret color="#777" /></PickerCaret>
            </PickerBox>
            <PickerBox $w={38}>
              <Picker aria-label="Font size" defaultValue=""><option value="" /></Picker>
              <PickerCaret><Caret color="#777" /></PickerCaret>
            </PickerBox>
            <ToolGroup $w={190} $gap={8}><ToolItems items={textTools} /></ToolGroup>
            <Divider />
            <ToolGroup $w={367}><ToolItems items={drawTools} /></ToolGroup>
          </Tools>
        </ToolBar>
        <Workspace>
          <Library>
            <LibraryHead>
              <Caret />
              <LibraryHeadName>基本绘图形状</LibraryHeadName>
              <IconButton $w={10} aria-label="Close"><Icon s={9}>{I.close}</Icon></IconButton>
            </LibraryHead>
            <ShapeGrid>
              {shapes.map((s, i) => (
                <ShapeCell key={i} aria-label={`Shape ${i + 1}`}>
                  <svg width="36" height="36" viewBox="-18 -18 36 36">{s}</svg>
                </ShapeCell>
              ))}
            </ShapeGrid>
          </Library>
          <ScrollTrack><ScrollThumb $size="58%" $at="0" /></ScrollTrack>
          <Center>
            <TopRuler><HorizontalRuler /></TopRuler>
            <CanvasRow>
              <SideRuler><VerticalRuler /></SideRuler>
              <Canvas>
                <ChartArea><SpiderChart /></ChartArea>
                <Band>
                  {[0, 1, 2].map((k) => (
                    <Card key={k}>
                      <CardTitle>Your Text</CardTitle>
                      <CardLine><span>{replaceText}</span><span>{replaceText}</span></CardLine>
                      <CardLine><span>{replaceText}</span><span>{replaceText}</span></CardLine>
                    </Card>
                  ))}
                </Band>
              </Canvas>
              <ScrollTrack><ScrollThumb $size="66%" $at="80px" /></ScrollTrack>
            </CanvasRow>
            <ScrollTrack $x><ScrollThumb $x $size="73%" $at="14%" /></ScrollTrack>
          </Center>
          <Rail>
            {rail.map(([id, label]) => (
              <IconButton key={id} $w={24} $h={24} $active={id === "chart"} aria-label={label}><Icon>{I[id]}</Icon></IconButton>
            ))}
          </Rail>
          <Panel>
            <Tabs>
              <Tab $shaded>图表属性<RedOval /></Tab>
              <Tab>图表数据</Tab>
            </Tabs>
            <PanelButtons>
              <PanelButton>导入</PanelButton>
              <PanelButton>导出</PanelButton>
            </PanelButtons>
            <SheetFrame>
              <SheetView>
                <Sheet>
                  <colgroup>
                    <col width="36" />
                    {columns.map(([c]) => <col key={c} width="60" />)}
                  </colgroup>
                  <thead>
                    <tr>
                      <th><HeadCell $corner><Swatch $c="#dd8044" /></HeadCell></th>
                      {columns.map(([c, s]) => (
                        <th key={c} scope="col">
                          <HeadCell><HeadLetter>{c}</HeadLetter>{s !== undefined && <Swatch $c={series[s][1]} />}</HeadCell>
                        </th>
                      ))}
                    </tr>
                  </thead>
                  <tbody>
                    {sheetRows.map((row, i) => (
                      <tr key={i}>
                        <th scope="row">{i + 1}</th>
                        {row.map((v, j) => <td key={j}>{v}</td>)}
                        <td />
                      </tr>
                    ))}
                  </tbody>
                </Sheet>
              </SheetView>
              <SheetBar><SheetThumb /></SheetBar>
              <SheetBar $x><SheetThumb $x /></SheetBar>
              <RedBox />
            </SheetFrame>
          </Panel>
        </Workspace>
        <StatusBar>
          <IconButton aria-label="Pages"><Icon s={16}>{I.pages}</Icon></IconButton>
          <PageSelect>Page-1<Chevron color="#6a7a99" /></PageSelect>
          <CurrentPage>Page-1</CurrentPage>
          <IconButton aria-label="Add page"><Icon s={12}>{I.plus}</Icon></IconButton>
          <ZoomTools>
            <IconButton $w={12} aria-label="Zoom out"><Icon s={12}>{I.minus}</Icon></IconButton>
            <ZoomSlider type="range" aria-label="Zoom" min="0" max="100" defaultValue="23" />
            <IconButton $w={16} aria-label="Zoom in"><Icon s={12}>{I.plus}</Icon></IconButton>
            <ZoomLevel aria-label="Zoom level" defaultValue="100"><option value="100">100%</option></ZoomLevel>
            <Chevron />
            <ScreenTools>
              <IconButton $w={24} aria-label="Full screen"><Icon s={14}>{I.full}</Icon></IconButton>
            </ScreenTools>
          </ZoomTools>
        </StatusBar>
      </Mirror>
    </>
  );
}
